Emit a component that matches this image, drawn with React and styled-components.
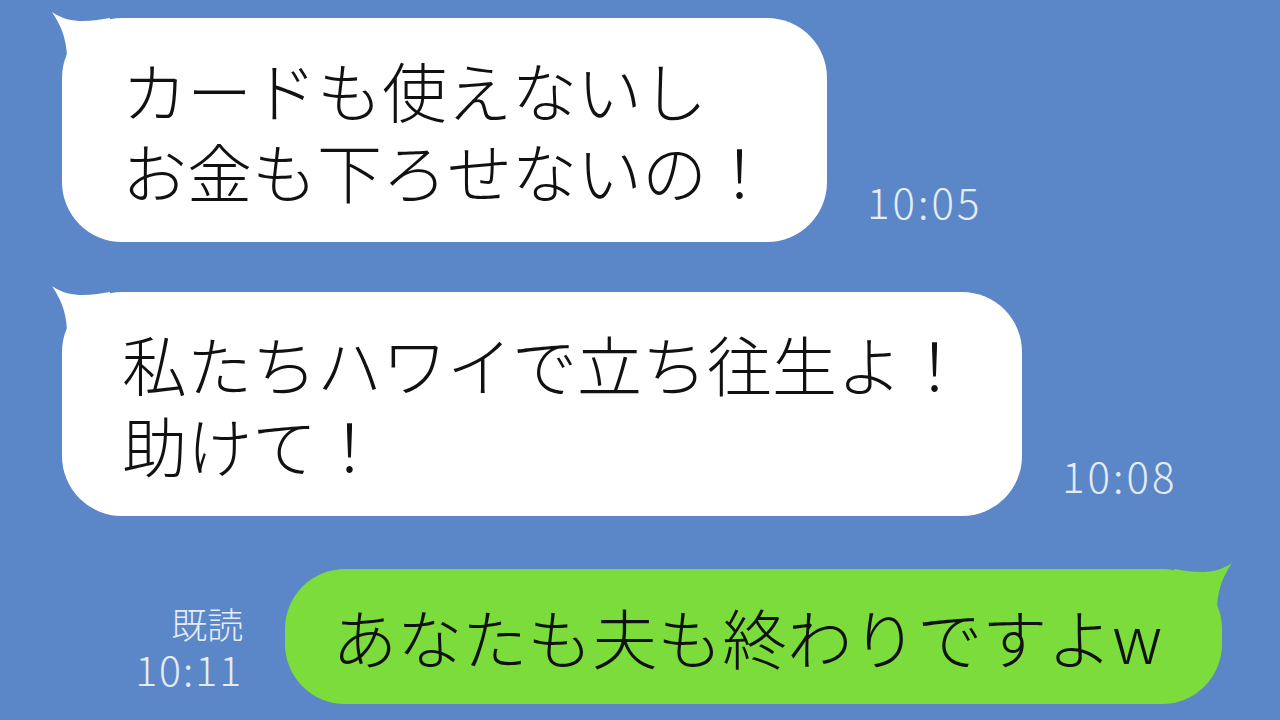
import React from 'react';
import styled, { createGlobalStyle } from 'styled-components';

const GlobalStyle = createGlobalStyle`
  html, body {
    margin: 0;
    padding: 0;
    background: #5b87c8;
  }
  body {
    font-family: 'Noto Sans CJK JP', 'Noto Sans', sans-serif;
  }
`;

const Chat = styled.div`
  width: 1280px;
  height: 720px;
  box-sizing: border-box;
  padding: 18px 58px 0 62px;
  display: flex;
  flex-direction: column;
  gap: 50px;
  overflow: hidden;
`;

const Row = styled.div`
  display: flex;
  align-items: flex-end;
  justify-content: ${(p) => (p.$mine ? 'flex-end' : 'flex-start')};
  margin-top: ${(p) => (p.$mine ? '3px' : '0')};
`;

const Bubble = styled.div`
  position: relative;
  background: ${(p) => (p.$mine ? '#7bdc3b' : '#ffffff')};
  color: #111111;
  font-size: 65px;
  font-weight: 300;
  line-height: 81px;
  white-space: nowrap;
  border-radius: 60px;
  padding: ${(p) => (p.$mine ? '27px 60px 27px 47px' : '31px 55px 31px 60px')};
`;

const Tail = styled.svg`
  position: absolute;
  top: -8px;
  width: 64px;
  height: 50px;
  ${(p) => (p.$mine ? 'right: -12px; transform: scaleX(-1);' : 'left: -12px;')}
`;

const Time = styled.div`
  color: #e4ecf7;
  font-size: 42px;
  line-height: 1;
  font-weight: 300;
  letter-spacing: 3px;
  padding-bottom: 20px;
  margin-left: 40px;
`;

const ReadInfo = styled.div`
  display: flex;
  flex-direction: column;
  align-items: flex-end;
  color: #e4ecf7;
  margin-right: 42px;
  padding-bottom: 14px;
  font-weight: 300;
`;

const ReadLabel = styled.span`
  font-size: 36px;
  line-height: 46px;
`;

const ReadTime = styled.span`
  font-size: 41px;
  line-height: 44px;
  letter-spacing: 2px;
`;

const BubbleTail = ({ mine, color }) => (
  <Tail $mine={mine} viewBox="0 0 64 50">
    <path
      d="M2 2 C 10 14, 16 26, 17 46 L 60 46 L 60 8 C 44 10, 22 16, 2 2 Z"
      fill={color}
    />
  </Tail>
);

const messages = [
  { id: 1, lines: ['カードも使えないし', 'お金も下ろせないの！'], time: '10:05' },
  { id: 2, lines: ['私たちハワイで立ち往生よ！', '助けて！'], time: '10:08' },
];

export default function App() {
  return (
    <>
      <GlobalStyle />
      <Chat>
        {messages.map((m) => (
          <Row key={m.id}>
            <Bubble>
              <BubbleTail color="#ffffff" />
              {m.lines.map((l, i) => (
                <React.Fragment key={i}>
                  {l}
                  {i < m.lines.length - 1 && <br />}
                </React.Fragment>
              ))}
            </Bubble>
            <Time>{m.time}</Time>
          </Row>
        ))}
        <Row $mine>
          <ReadInfo>
            <ReadLabel>既読</ReadLabel>
            <ReadTime>10:11</ReadTime>
          </ReadInfo>
          <Bubble $mine>
            <BubbleTail mine color="#7bdc3b" />
            あなたも夫も終わりですよw
          </Bubble>
        </Row>
      </Chat>
    </>
  );
}
